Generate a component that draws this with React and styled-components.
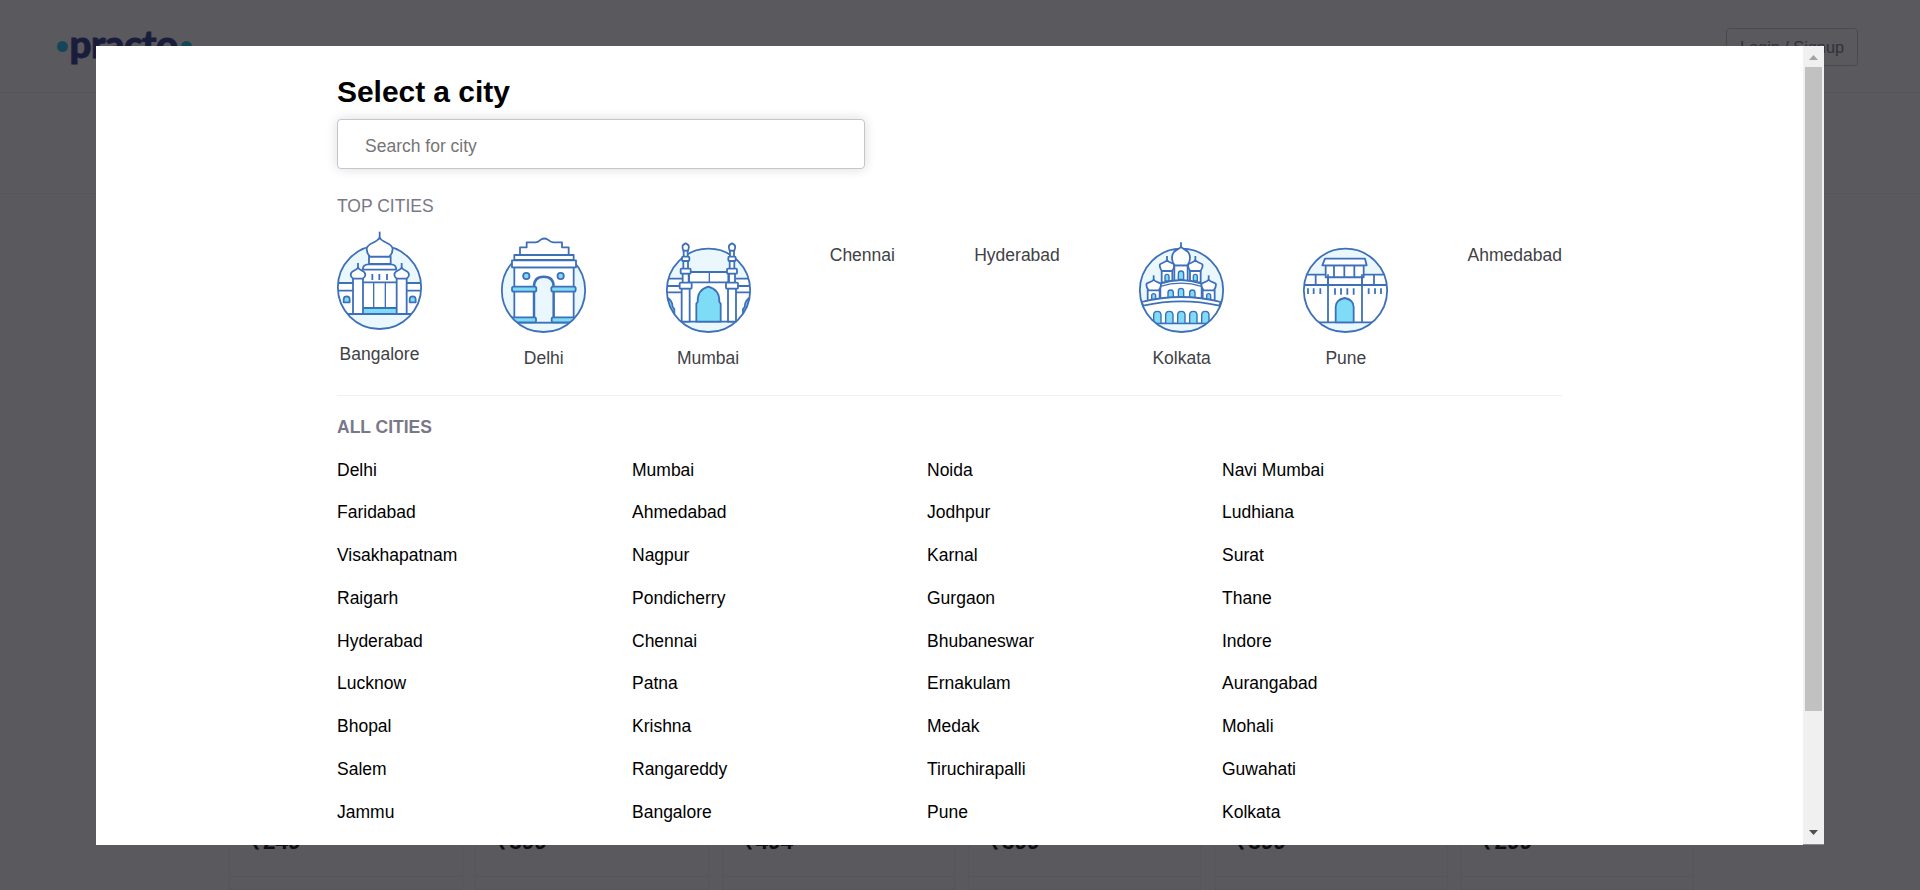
import React from "react";
import styled, { createGlobalStyle } from "styled-components";

const GlobalStyle = createGlobalStyle`
  * { box-sizing: border-box; }
  body {
    margin: 0;
    overflow: hidden;
    font-family: "Liberation Sans", Arial, sans-serif;
    font-size: 17.5px;
    color: #000;
  }
`;

/* ---------- page behind the dialog ---------- */

const Page = styled.div`
  position: relative;
  display: flex;
  flex-direction: column;
  height: 890px;
  overflow: hidden;
  background: #fff;
`;

const Header = styled.header`
  display: flex;
  justify-content: space-between;
  align-items: flex-start;
  height: 93px;
  padding: 28px 62px 0 57px;
  border-bottom: 1px solid #f0f0f5;
`;

const Logo = styled.div`
  display: flex;
  align-items: center;
  height: 37px;
`;

const LogoDot = styled.span`
  width: 11px;
  height: 11px;
  border-radius: 50%;
  background: #14bef0;
`;

const LogoText = styled.span`
  width: 111.5px;
  margin: -8px 0 0 1.5px;
  font: 900 38.5px/48px Lato, sans-serif;
  letter-spacing: -0.5px;
  color: #28328c;
  -webkit-text-stroke: 0.8px #28328c;
`;

const LoginButton = styled.button`
  width: 132px;
  height: 38px;
  padding: 0;
  border: 1px solid #c8c8d0;
  border-radius: 4px;
  background: transparent;
  font: 16.25px/36px "Liberation Sans", Arial, sans-serif;
  color: #787887;
`;

const NavBar = styled.nav`
  height: 101px;
  border-bottom: 1px solid #f0f0f5;
`;

const Cards = styled.div`
  display: flex;
  gap: 12.8px;
  flex: 1;
  padding: 0 0 0 229px;
`;

const Card = styled.div`
  display: flex;
  flex-direction: column;
  flex: none;
  width: 233.5px;
  border: 1px solid #f0f0f5;
  border-top: 0;
`;

const Price = styled.div`
  display: flex;
  align-items: flex-end;
  height: 683px;
  padding: 0 20px 25px;
  border-bottom: 1px solid #f0f0f5;
  font: bold 22.5px/18px "Liberation Sans", Arial, sans-serif;
`;

/* ---------- dialog ---------- */

const Overlay = styled.div`
  position: absolute;
  inset: 0;
  display: flex;
  padding: 46px 96px 45px;
  background: rgba(20, 18, 24, 0.7);
`;

const Dialog = styled.div`
  display: flex;
  flex: 1;
  overflow: hidden;
  background: #fff;
`;

const Body = styled.main`
  flex: 1;
  padding: 28px 241px 0 241px;
`;

const Title = styled.h1`
  margin: 0;
  font-size: 30px;
  line-height: 35px;
  font-weight: 700;
  letter-spacing: -0.05px;
`;

const SearchInput = styled.input`
  display: block;
  width: 528px;
  height: 50px;
  margin-top: 10px;
  padding: 5px 27px 0;
  border: 1px solid #c5c5d0;
  border-radius: 4px;
  outline: 0;
  box-shadow: 0 0 12px rgba(0, 20, 10, 0.15);
  font: 17.5px "Liberation Sans", Arial, sans-serif;
  &::placeholder { color: #757575; }
`;

const SectionLabel = styled.h2`
  margin: 0;
  padding-top: ${(p) => p.$top}px;
  font-size: 17.5px;
  line-height: 20px;
  font-weight: ${(p) => (p.$bold ? 700 : 400)};
  color: #787887;
`;

const TopCities = styled.div`
  display: flex;
  justify-content: space-between;
  height: 180px;
  padding-top: 14px;
  border-bottom: 1px solid #f0f0f2;
`;

const TopCity = styled.div`
  display: flex;
  flex-direction: column;
  align-items: center;
  color: #414146;
`;

const CityName = styled.span`
  margin-top: ${(p) => (p.$plain ? 15 : 14)}px;
  line-height: 20px;
`;

const AllCities = styled.div`
  display: grid;
  grid-template-columns: repeat(4, 295px);
  grid-auto-rows: 42.8px;
  padding-top: 11.5px;
`;

const City = styled.a`
  line-height: 42.8px;
`;

const ScrollBar = styled.div`
  display: flex;
  flex-direction: column;
  align-items: center;
  width: 21px;
  background: #f0f0f0;
  border-bottom: 1px solid #8a8a8c;
`;

const ScrollArrow = styled.svg`
  display: block;
  width: 21px;
  height: 21px;
  fill: ${(p) => p.$color};
`;

const ScrollTrack = styled.div`
  flex: 1;
`;

const ScrollThumb = styled.div`
  width: 17px;
  height: 644px;
  background: #c1c1c1;
`;

/* ---------- landmark drawings ---------- */

const Art = styled.svg`
  display: block;
  width: 85px;
  height: ${(p) => p.$height}px;
  overflow: visible;
  fill: #fff;
  stroke: #3d70b9;
  stroke-width: 5.4;
  stroke-linejoin: round;
  .sky { fill: #eaf8fe; }
  .wall { stroke: none; }
  .glass { fill: #7edcf7; }
  .line { fill: none; }
`;

function Landmark({ id, x, cy, height, children, over }) {
  const cx = x + 127.5;
  return (
    <Art $height={height} viewBox={`${x} 15 255 ${height * 3}`}>
      <clipPath id={id}>
        <circle cx={cx} cy={cy} r="125" />
      </clipPath>
      <circle className="sky" cx={cx} cy={cy} r="125" stroke="none" />
      <g clipPath={`url(#${id})`}>{children}</g>
      <circle className="line" cx={cx} cy={cy} r="125" />
      {over}
    </Art>
  );
}

function Bangalore() {
  const tower = (c) => (
    <g key={c}>
      <path d={`M${c - 15} 158V267H${c + 15}V158Z`} />
      <path d={`M${c - 14} 161Q${c - 22} 156 ${c - 22} 149C${c - 22} 136 ${c - 6} 138 ${c} 128C${c + 6} 138 ${c + 22} 136 ${c + 22} 149Q${c + 22} 156 ${c + 14} 161Z`} />
      <path d={`M${c} 114V130`} />
    </g>
  );
  return (
    <Landmark
      id="bangalore"
      x={36}
      cy={187}
      height={100}
      over={
        <>
          <path d="M115 133H212V172H115Z" stroke="none" />
          <path d="M111 172H216V267H111Z" />
          <path className="line" d="M146 172V248M181 172V248" strokeWidth="4" />
          <path className="glass" d="M111 249H216V267H111Z" />
          <path className="line" d="M142 147V165M163 147V165M186 147V165" />
          <path d="M113 134Q114 118 130 118H198Q213 118 214 134Z" />
          <path d="M132 95H197V117H132Z" />
          <path d="M135 95Q125 84 125 72C127 52 154 56 164 38C174 56 201 52 203 72Q203 84 193 95Z" />
          <path d="M164 20V40" />
          {[99, 230].map(tower)}
        </>
      }
    >
      <path className="wall" d="M36 174H292V267H36Z" />
      <path className="line" d="M36 174H84M36 197H84M245 174H292M245 197H292M36 267H292" />
      <path className="glass" d="M56 232V222Q57 214 65 214Q73 214 74 222V232Z" />
      <path className="glass" d="M254 232V222Q255 214 263 214Q271 214 272 222V232Z" />
    </Landmark>
  );
}

function Delhi() {
  return (
    <Landmark
      id="delhi"
      x={33}
      cy={196}
      height={104}
      over={
        <>
          <path d="M90 90V67H110V52H136C148 52 149 45 154 43Q163 38 172 43C177 45 179 52 190 52H216V67H236V90Z" />
          <path d="M73 90H251V105H73Z" />
          <path d="M66 106H258V127H66Z" />
          <rect className="glass" x="66" y="185" width="73" height="15" rx="5" />
          <rect className="glass" x="184" y="185" width="73" height="15" rx="5" />
        </>
      }
    >
      <path d="M73 127H251V292H73Z" />
      <path className="sky" d="M132 292V185Q132 155 161 155Q191 155 191 185V292" strokeWidth="7.5" />
      <path className="line" d="M33 293H288" />
      <rect className="glass" x="60" y="277" width="78" height="15" rx="4" />
      <rect className="glass" x="185" y="277" width="80" height="15" rx="4" />
      <circle className="glass" cx="109" cy="153" r="9.5" />
      <circle className="glass" cx="212" cy="153" r="9.5" />
    </Landmark>
  );
}

function Mumbai() {
  const minaret = (c) => (
    <g key={c}>
      <path d={`M${c - 12} 190H${c + 12}V290H${c - 12}Z`} />
      <path d={`M${c - 9} 145H${c + 9}V174H${c - 9}Z`} />
      <path d={`M${c - 7} 108H${c + 7}V132H${c - 7}Z`} />
      <path d={`M${c - 6} 76H${c + 6}V96H${c - 6}Z`} />
      <path d={`M${c - 7} 77Q${c - 13} 62 ${c - 5} 58Q${c} 53 ${c + 5} 58Q${c + 13} 62 ${c + 7} 77Z`} />
      <rect x={c - 18} y="173" width="36" height="18" rx="3" />
      <rect x={c - 15} y="131" width="30" height="15" rx="3" />
      <rect x={c - 11} y="95" width="22" height="13" rx="3" />
    </g>
  );
  return (
    <Landmark id="mumbai" x={31} cy={196} height={104} over={[90, 229].map(minaret)}>
      <path className="wall" d="M31 161H288V290H31Z" />
      <path className="line" d="M31 161H80M31 183H80M31 202H80M240 161H288M240 183H288M240 202H288M31 290H288" />
      <path d="M100 141H218V172H100Z" />
      <path className="line" d="M161 141V172" strokeWidth="4" />
      <path className="glass" d="M122 290V236L126 231C125 204 140 190 158 185C177 190 192 204 191 231L195 236V290Z" />
      <path className="glass" d="M20 214Q50 218 51 246L56 252V290H20Z" />
      <path className="glass" d="M298 214Q268 218 267 246L262 252V290H298Z" />
    </Landmark>
  );
}

function Kolkata() {
  const dome = (c, top, base, r) => (
    <>
      <path d={`M${c - r * 0.7} ${base}Q${c - r} ${base - r * 0.4} ${c - r} ${base - r * 0.8}C${c - r} ${top + r * 0.35} ${c - r * 0.3} ${top + r * 0.4} ${c} ${top}C${c + r * 0.3} ${top + r * 0.4} ${c + r} ${top + r * 0.35} ${c + r} ${base - r * 0.8}Q${c + r} ${base - r * 0.4} ${c + r * 0.7} ${base}Z`} />
      <path d={`M${c} ${top - 13}V${top + 2}`} />
    </>
  );
  const arch = (c, top, base, w) => (
    <path
      key={c}
      className="glass"
      strokeWidth="4.2"
      d={`M${c - w} ${base}V${top + w}Q${c - w} ${top} ${c} ${top}Q${c + w} ${top} ${c + w} ${top + w}V${base}Z`}
    />
  );
  return (
    <Landmark
      id="kolkata"
      x={28}
      cy={196}
      height={104}
      over={
        <>
          {[112, 197].map((c) => (
            <g key={c}>
              <path d={`M${c - 16} 137H${c + 16}V172H${c - 16}Z`} />
              {arch(c, 148, 168, 6)}
              {dome(c, 106, 138, 22)}
            </g>
          ))}
          <path d="M134 121H174V168H134Z" />
          {arch(154, 138, 163, 8)}
          {dome(154, 65, 121, 27)}
          <path d="M92 184V176Q154 154 216 176V184L216 225H92Z" />
          <path className="line" d="M92 184Q154 165 216 184" strokeWidth="4" />
          {arch(123, 195, 222, 8)}
          {arch(154, 190, 222, 8)}
          {arch(188, 195, 222, 8)}
          {[72, 237].map((c) => (
            <g key={c}>
              <path d={`M${c - 18} 195H${c + 18}V230H${c - 18}Z`} />
              {arch(c, 206, 226, 6)}
              {dome(c, 164, 196, 22)}
            </g>
          ))}
          <path d="M36 231Q155 201 273 231L269 242Q155 216 41 242Z" />
        </>
      }
    >
      <path d="M20 236Q155 202 290 236V295H20Z" />
      {[83, 119, 155, 191, 227].map((c) => arch(c, 259, 295, 11))}
    </Landmark>
  );
}

function Pune() {
  return (
    <Landmark id="pune" x={28} cy={196} height={104}>
      <path className="wall" d="M20 148H290V292H20Z" />
      <path className="line" d="M20 149H104M205 149H290M20 292H290M66 149V180M241 149V180" />
      <path d="M96 121H210V157H96Z" />
      <path className="line" d="M121 121V157M152 121V157M182 121V157" />
      <path d="M94 101H214L219 121H86Z" />
      <path d="M103 157H205V180H103Z" />
      <path className="line" d="M20 180H290M103 148V292M205 148V292" />
      <path
        className="line"
        d="M43 190V207M60 190V207M80 190V207M124 190V209M142 190V209M161 190V209M180 190V209M225 190V207M244 190V207M262 190V207"
      />
      <path className="glass" d="M126 292V246C126 230 138 222 153 219C168 222 180 230 180 246V292Z" />
    </Landmark>
  );
}

const topCities = [
  ["Bangalore", Bangalore],
  ["Delhi", Delhi],
  ["Mumbai", Mumbai],
  ["Chennai"],
  ["Hyderabad"],
  ["Kolkata", Kolkata],
  ["Pune", Pune],
  ["Ahmedabad"],
];

const allCities = [
  "Delhi", "Mumbai", "Noida", "Navi Mumbai",
  "Faridabad", "Ahmedabad", "Jodhpur", "Ludhiana",
  "Visakhapatnam", "Nagpur", "Karnal", "Surat",
  "Raigarh", "Pondicherry", "Gurgaon", "Thane",
  "Hyderabad", "Chennai", "Bhubaneswar", "Indore",
  "Lucknow", "Patna", "Ernakulam", "Aurangabad",
  "Bhopal", "Krishna", "Medak", "Mohali",
  "Salem", "Rangareddy", "Tiruchirapalli", "Guwahati",
  "Jammu", "Bangalore", "Pune", "Kolkata",
];

const prices = ["₹249", "₹399", "₹494", "₹399", "₹399", "₹299"];

export default function App() {
  return (
    <>
      <GlobalStyle />
      <Page>
        <Header>
          <Logo>
            <LogoDot />
            <LogoText>practo</LogoText>
            <LogoDot />
          </Logo>
          <LoginButton>Login / Signup</LoginButton>
        </Header>
        <NavBar />
        <Cards>
          {prices.map((price, i) => (
            <Card key={i}>
              <Price>{price}</Price>
            </Card>
          ))}
        </Cards>
        <Overlay>
          <Dialog>
            <Body>
              <Title>Select a city</Title>
              <SearchInput placeholder="Search for city" />
              <SectionLabel $top={27}>TOP CITIES</SectionLabel>
              <TopCities>
                {topCities.map(([name, Drawing]) => (
                  <TopCity key={name}>
                    {Drawing && <Drawing />}
                    <CityName $plain={!Drawing}>{name}</CityName>
                  </TopCity>
                ))}
              </TopCities>
              <SectionLabel $top={21} $bold>ALL CITIES</SectionLabel>
              <AllCities>
                {allCities.map((name) => (
                  <City key={name}>{name}</City>
                ))}
              </AllCities>
            </Body>
            <ScrollBar>
              <ScrollArrow $color="#a3a3a3" viewBox="0 0 21 21">
                <path d="M6 14L10.5 9L15 14Z" />
              </ScrollArrow>
              <ScrollTrack>
                <ScrollThumb />
              </ScrollTrack>
              <ScrollArrow $color="#505050" viewBox="0 0 21 21">
                <path d="M6 7L10.5 12L15 7Z" />
              </ScrollArrow>
            </ScrollBar>
          </Dialog>
        </Overlay>
      </Page>
    </>
  );
}
